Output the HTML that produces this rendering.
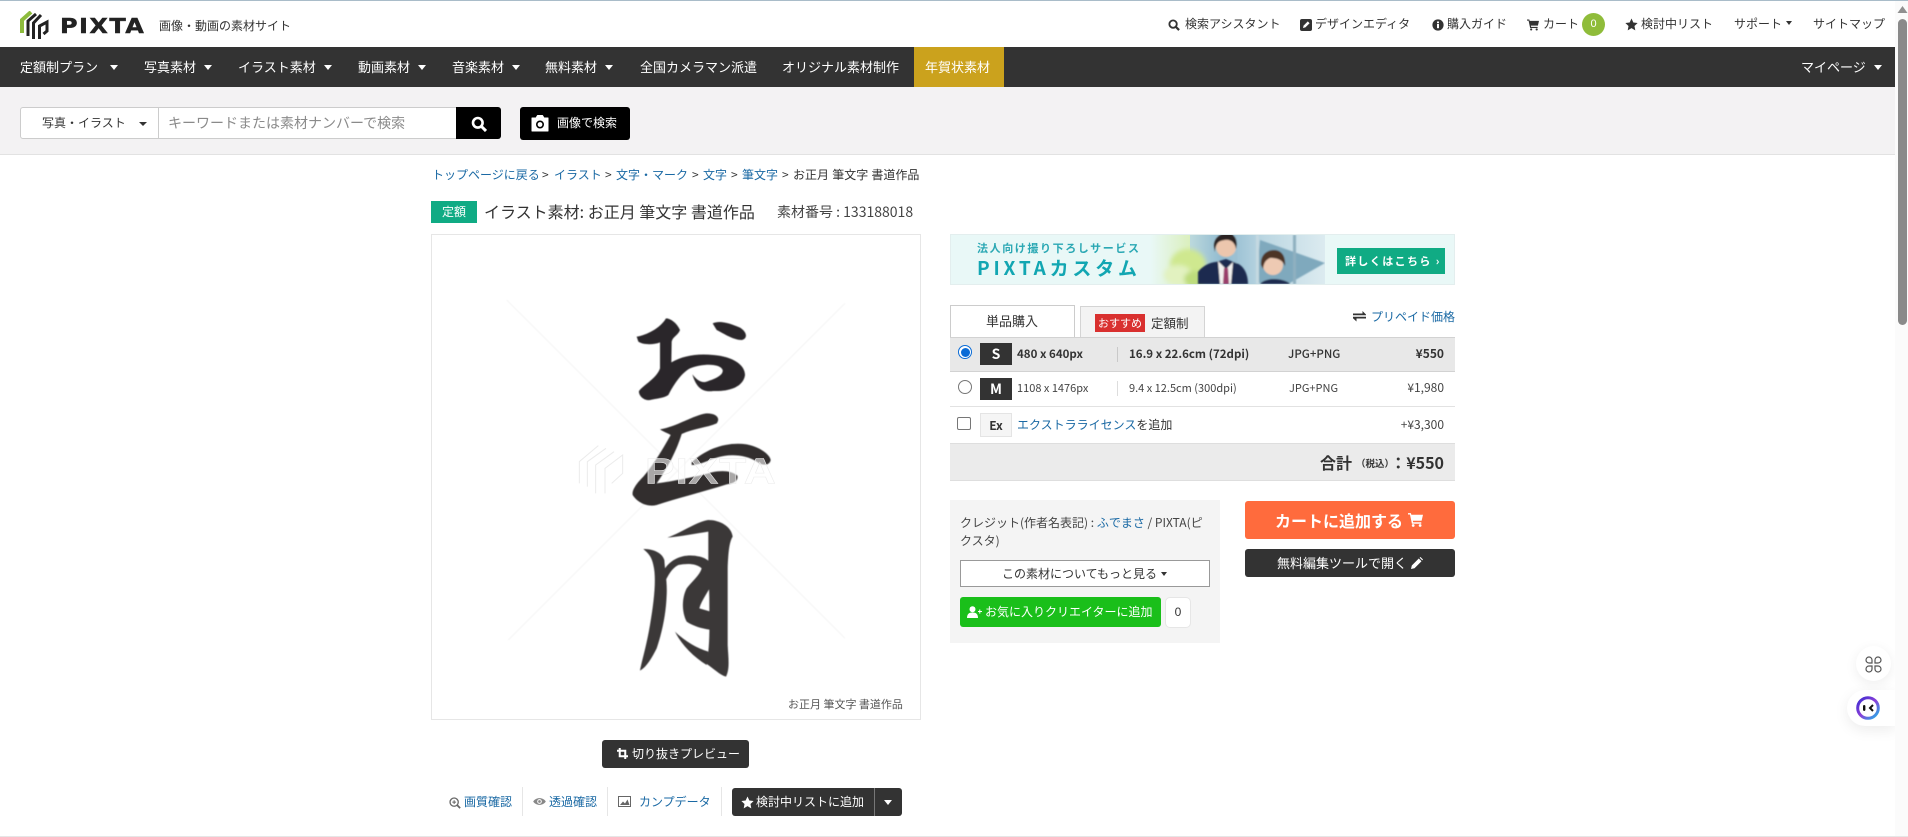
<!DOCTYPE html>
<html lang="ja">
<head>
<meta charset="utf-8">
<title>お正月 筆文字 書道作品 - PIXTA</title>
<style>
html,body{margin:0;padding:0;background:#fff;width:1908px;height:837px;overflow:hidden}
body{position:relative;font-family:"Liberation Sans","Noto Sans CJK JP",sans-serif;color:#333;font-size:12px}
.t{position:absolute;white-space:nowrap;font-family:"Noto Sans CJK JP","Liberation Sans",sans-serif;line-height:20px;font-size:12px}
.b{position:absolute;box-sizing:border-box}
.w{color:#fff}
a{color:#1a69a4;text-decoration:none}
.c{position:absolute;width:0;height:0;border-left:4px solid transparent;border-right:4px solid transparent;border-top:5px solid #fff}
svg{position:absolute;display:block}
</style>
</head>
<body>
<div class="b" style="left:0;top:0;width:1908px;height:1px;background:#a9bcc9"></div>

<!-- logo -->
<svg style="left:20px;top:11px" width="29" height="28" viewBox="0 0 29 28" fill="none" stroke-width="3">
<path d="M2 22V9L11 1" stroke="#8dbb3c" stroke-width="4"/>
<path d="M8 25V10L16 3" stroke="#222"/>
<path d="M13.500 28V12L21 4" stroke="#222"/>
<path d="M19.500 28V15L27 11V20L23.500 23" stroke="#222"/>
</svg>
<div class="t" style="left:60px;top:16px;font-family:'DejaVu Sans',sans-serif;font-weight:700;font-size:20px;line-height:20px;letter-spacing:1.200px;color:#222;-webkit-text-stroke:.4px #222;transform:scaleX(1.2);transform-origin:0 50%">PIXTA</div>
<div class="t" style="left:159px;top:16px;color:#333">画像・動画の素材サイト</div>

<!-- top right links -->
<svg style="left:1168px;top:19px" width="12" height="12" viewBox="0 0 13 13" fill="none" stroke="#333" stroke-width="2"><circle cx="5.500" cy="5.500" r="4"/><path d="M8.500 8.500L12 12" stroke-width="2.400"/></svg>
<div class="t" style="left:1185px;top:14px">検索アシスタント</div>
<svg style="left:1300px;top:19px" width="12" height="12" viewBox="0 0 12 12"><rect width="12" height="12" rx="2" fill="#333"/><path d="M3 9l.6-2.400L7.800 2.400 9.600 4.200 5.400 8.400z" fill="#fff"/></svg>
<div class="t" style="left:1315px;top:14px">デザインエディタ</div>
<svg style="left:1432px;top:19px" width="12" height="12" viewBox="0 0 12 12"><circle cx="6" cy="6" r="5.600" fill="#333"/><rect x="5" y="5" width="2" height="4.200" fill="#fff"/><rect x="5" y="2.500" width="2" height="1.700" fill="#fff"/></svg>
<div class="t" style="left:1447px;top:14px">購入ガイド</div>
<svg style="left:1527px;top:19px" width="12" height="12" viewBox="0 0 13 12" fill="#333"><path d="M0 0h2.500l.4 1.500H13l-1.200 5.200H4.200l.3 1.300H11.500v1.200H3.400L1.700 1.200H0z"/><circle cx="4.500" cy="10.800" r="1.200"/><circle cx="10.500" cy="10.800" r="1.200"/></svg>
<div class="t" style="left:1543px;top:14px">カート</div>
<div class="b" style="left:1582px;top:13px;width:23px;height:23px;border-radius:50%;background:#8fbc3a;color:#fff;text-align:center;line-height:23px;font-size:11px">0</div>
<svg style="left:1625px;top:18px" width="13" height="13" viewBox="0 0 24 24" fill="#333"><path d="M12 1l3.400 7.300 7.900 1-5.800 5.500 1.500 8L12 18.800 5 22.800l1.500-8L.7 9.300l7.900-1z"/></svg>
<div class="t" style="left:1641px;top:14px">検討中リスト</div>
<div class="t" style="left:1734px;top:14px">サポート</div>
<div class="c" style="left:1786px;top:21px;border-top-color:#333;border-left-width:3.500px;border-right-width:3.500px;border-top-width:4px"></div>
<div class="t" style="left:1813px;top:14px">サイトマップ</div>

<!-- nav -->
<div class="b" style="left:0;top:47px;width:1895px;height:40px;background:#333"></div>
<div class="b" style="left:914px;top:47px;width:90px;height:40px;background:#cba21d"></div>
<div class="t w" style="left:20px;top:57px;font-size:13px">定額制プラン</div><div class="c" style="left:110px;top:65px"></div>
<div class="t w" style="left:144px;top:57px;font-size:13px">写真素材</div><div class="c" style="left:204px;top:65px"></div>
<div class="t w" style="left:238px;top:57px;font-size:13px">イラスト素材</div><div class="c" style="left:324px;top:65px"></div>
<div class="t w" style="left:358px;top:57px;font-size:13px">動画素材</div><div class="c" style="left:418px;top:65px"></div>
<div class="t w" style="left:452px;top:57px;font-size:13px">音楽素材</div><div class="c" style="left:512px;top:65px"></div>
<div class="t w" style="left:545px;top:57px;font-size:13px">無料素材</div><div class="c" style="left:605px;top:65px"></div>
<div class="t w" style="left:640px;top:57px;font-size:13px">全国カメラマン派遣</div>
<div class="t w" style="left:782px;top:57px;font-size:13px">オリジナル素材制作</div>
<div class="t w" style="left:925px;top:57px;font-size:13px">年賀状素材</div>
<div class="t w" style="left:1801px;top:57px;font-size:13px">マイページ</div><div class="c" style="left:1874px;top:65px"></div>

<!-- search -->
<div class="b" style="left:0;top:87px;width:1895px;height:68px;background:#f3f2f3;border-bottom:1px solid #e2e2e2"></div>
<div class="b" style="left:20px;top:107px;width:437px;height:32px;background:#fff;border:1px solid #ccc;border-radius:3px 0 0 3px"></div>
<div class="b" style="left:158px;top:108px;width:1px;height:30px;background:#ccc"></div>
<div class="t" style="left:42px;top:113px;color:#333">写真・イラスト</div>
<div class="c" style="left:139px;top:122px;border-top-color:#333;border-top-width:4px"></div>
<div class="t" style="left:168px;top:113px;font-size:14px;color:#8a8a8a">キーワードまたは素材ナンバーで検索</div>
<div class="b" style="left:456px;top:107px;width:45px;height:32px;background:#000;border-radius:0 3px 3px 0"></div>
<svg style="left:471px;top:116px" width="16" height="16" viewBox="0 0 16 16" fill="none" stroke="#fff" stroke-width="2.600"><circle cx="6.800" cy="6.800" r="4.800"/><path d="M10.500 10.500L15 15" stroke-width="3"/></svg>
<div class="b" style="left:520px;top:107px;width:110px;height:33px;background:#000;border-radius:3px"></div>
<svg style="left:531px;top:115px" width="18" height="17" viewBox="0 0 18 17"><path d="M1 3h4l1.500-2.500h5L13 3h4v13H1z" fill="#fff" stroke="#fff" stroke-linejoin="round"/><circle cx="9" cy="9.500" r="3.200" fill="none" stroke="#000" stroke-width="1.600"/></svg>
<div class="t w" style="left:557px;top:113px">画像で検索</div>

<!-- breadcrumb -->
<div class="t" style="left:432px;top:165px"><a href="#">トップページに戻る</a></div>
<div class="t" style="left:542px;top:165px">&gt;</div>
<div class="t" style="left:554px;top:165px"><a href="#">イラスト</a></div>
<div class="t" style="left:605px;top:165px">&gt;</div>
<div class="t" style="left:616px;top:165px"><a href="#">文字・マーク</a></div>
<div class="t" style="left:692px;top:165px">&gt;</div>
<div class="t" style="left:703px;top:165px"><a href="#">文字</a></div>
<div class="t" style="left:731px;top:165px">&gt;</div>
<div class="t" style="left:742px;top:165px"><a href="#">筆文字</a></div>
<div class="t" style="left:782px;top:165px">&gt;</div>
<div class="t" style="left:793px;top:165px;word-spacing:.5px">お正月 筆文字 書道作品</div>

<!-- title -->
<div class="b" style="left:431px;top:201px;width:46px;height:22px;background:#10ab84;color:#fff;text-align:center;line-height:22px;font-family:'Noto Sans CJK JP',sans-serif">定額</div>
<div class="t" style="left:484px;top:201px;font-size:16px;color:#333">イラスト素材: お正月 筆文字 書道作品</div>
<div class="t" style="left:777px;top:202px;font-size:14px;color:#444">素材番号 : 133188018</div>

<!-- main image -->
<div class="b" style="left:431px;top:234px;width:490px;height:486px;border:1px solid #e6e6e6;background:#fff"></div>
<svg style="left:430px;top:235px" width="500" height="490" viewBox="0 0 1500 1470">
<defs>
<filter id="bl" x="-5%" y="-5%" width="110%" height="110%"><feGaussianBlur stdDeviation="1.800"/></filter>
<filter id="bl2" x="-5%" y="-5%" width="110%" height="110%"><feGaussianBlur stdDeviation="1.500"/></filter>
</defs>
<path d="M230 195L1245 1210M1245 205L235 1215" stroke="#f4f4f4" stroke-width="3" fill="none" filter="url(#bl2)"/>
<g fill="#2b2829" filter="url(#bl)">
<path d="M620 305C650 300 690 280 708 250C720 250 740 262 750 285C745 300 728 305 725 320L724 382C760 362 800 355 850 360C910 365 945 390 945 420C940 455 900 470 850 468C820 472 800 462 787 418C800 435 815 445 830 440C860 430 880 420 878 405C870 385 820 385 780 400C760 410 735 440 715 480C700 490 680 490 660 495C640 498 625 480 627 468C640 450 680 430 690 400L690 322C670 330 640 330 625 320Z"/>
<path d="M848 265C870 255 900 265 930 278C950 290 955 310 935 315C910 315 880 295 860 285Z"/>
</g>
<g fill="#302d2e" filter="url(#bl)">
<path d="M690 583C740 575 790 540 830 535C860 535 872 550 860 565C830 578 790 580 755 597C745 630 725 680 680 745C720 740 800 725 845 712C880 705 905 708 922 722C925 735 915 745 890 748C820 770 740 790 680 810C650 818 620 800 608 780C605 765 620 745 640 725C670 690 700 640 722 600C715 595 700 590 690 583Z"/>
<path d="M785 682C830 640 890 620 950 628C990 635 1020 660 1022 675C1020 690 1000 695 980 680C950 660 900 655 860 668C830 678 810 690 785 690Z"/>
</g>
<g fill="#3a3738" filter="url(#bl)">
<path d="M640 942C665 942 695 950 703 975C705 1010 712 1040 710 1080C708 1130 700 1180 680 1240C665 1270 650 1295 630 1307C635 1280 650 1230 660 1170C672 1100 680 1030 670 990C665 965 655 955 640 942Z"/>
<path d="M712 908C760 890 800 860 835 855C870 855 905 875 908 905C898 920 895 950 893 1000L893 1230C895 1270 900 1300 888 1325C870 1320 850 1300 828 1285L835 1250C840 1200 838 1150 838 1090L835 990L835 890C800 895 750 905 712 908Z"/>
<path d="M705 1000C730 965 770 955 810 965C850 975 860 1010 850 1040C835 1070 815 1095 808 1120L860 1135C885 1140 890 1165 880 1185C840 1190 790 1175 770 1160C755 1130 755 1090 770 1060C785 1040 810 1020 815 1000C800 985 770 985 745 990C725 1000 715 1020 705 1040Z"/>
<path d="M735 1190C760 1215 800 1240 835 1250L830 1290C790 1265 755 1230 735 1190Z"/>
</g>
<g fill="none" stroke="#ebebeb" stroke-width="3">
<path d="M448 745V680L505 632M472 755V680L528 640M497 775V690L552 650M525 775V700L578 660V715L545 745"/>
</g>
<text x="645" y="745" font-family="Liberation Sans,sans-serif" font-weight="700" font-size="108" letter-spacing="2" textLength="395" lengthAdjust="spacingAndGlyphs" fill="#fff" fill-opacity=".58" stroke="#ececec" stroke-width="1.500">PIXTA</text>
</svg>
<div class="t" style="left:788px;top:694px;font-size:11px;color:#555">お正月 筆文字 書道作品</div>

<!-- crop button -->
<div class="b" style="left:602px;top:740px;width:147px;height:28px;background:#333;border-radius:3px"></div>
<svg style="left:617px;top:748px" width="11" height="11" viewBox="0 0 12 12" fill="none" stroke="#fff" stroke-width="2.200"><path d="M3 0V9H12M0 3H9V12"/></svg>
<div class="t w" style="left:632px;top:744px">切り抜きプレビュー</div>

<!-- under image row -->
<svg style="left:449px;top:797px" width="12" height="12" viewBox="0 0 14 14" fill="none" stroke="#666" stroke-width="1.500"><circle cx="6" cy="6" r="4.800"/><path d="M9.500 9.500L13 13" stroke-width="2"/><path d="M3.800 6H8.200M6 3.800V8.200" stroke-width="1.200"/></svg>
<div class="t" style="left:464px;top:792px"><a href="#">画質確認</a></div>
<div class="b" style="left:522px;top:787px;width:1px;height:29px;background:#e6e6e6"></div>
<svg style="left:533px;top:797px" width="13" height="9" viewBox="0 0 14 10"><path d="M0 5C3 0 11 0 14 5C11 10 3 10 0 5Z" fill="#888"/><circle cx="7" cy="5" r="2.600" fill="#fff"/><circle cx="7" cy="5" r="1.500" fill="#888"/></svg>
<div class="t" style="left:549px;top:792px"><a href="#">透過確認</a></div>
<div class="b" style="left:607px;top:787px;width:1px;height:29px;background:#e6e6e6"></div>
<svg style="left:618px;top:796px" width="13" height="11" viewBox="0 0 13 11"><rect x=".5" y=".5" width="12" height="10" fill="#fff" stroke="#666"/><path d="M2 9L5 5.500L7 7.500L9.500 3.500L11.500 9Z" fill="#666"/></svg>
<div class="t" style="left:639px;top:792px"><a href="#">カンプデータ</a></div>
<div class="b" style="left:721px;top:787px;width:1px;height:29px;background:#e6e6e6"></div>
<div class="b" style="left:732px;top:788px;width:170px;height:28px;background:#333;border-radius:3px"></div>
<div class="b" style="left:874px;top:788px;width:1px;height:28px;background:#777"></div>
<svg style="left:741px;top:796px" width="13" height="13" viewBox="0 0 24 24" fill="#fff"><path d="M12 1l3.400 7.300 7.900 1-5.800 5.500 1.500 8L12 18.800 5 22.800l1.500-8L.7 9.300l7.900-1z"/></svg>
<div class="t w" style="left:756px;top:792px">検討中リストに追加</div>
<div class="c" style="left:884px;top:800px"></div>

<!-- banner -->
<div class="b" style="left:950px;top:234px;width:505px;height:51px;background:#e9f8f7;border:1px solid #e3eeee;overflow:hidden"></div>
<svg style="left:1150px;top:235px" width="175" height="49" viewBox="0 0 175 49">
<defs>
<linearGradient id="fg" x1="0" x2="1" y1="0" y2="0"><stop offset="0" stop-color="#e9f8f7"/><stop offset=".5" stop-color="#dff2d0"/><stop offset="1" stop-color="#d5eca6"/></linearGradient>
<linearGradient id="bg" x1="0" x2="1" y1="0" y2="0"><stop offset="0" stop-color="#bcd9dd"/><stop offset=".25" stop-color="#8fb9cf"/><stop offset=".55" stop-color="#bcd7e2"/><stop offset="1" stop-color="#dcebf0"/></linearGradient>
<filter id="s"><feGaussianBlur stdDeviation=".7"/></filter>
<filter id="s2"><feGaussianBlur stdDeviation="2.500"/></filter>
</defs>
<rect width="55" height="49" fill="url(#fg)"/>
<rect x="40" width="135" height="49" fill="url(#bg)"/>
<g filter="url(#s2)">
<ellipse cx="38" cy="30" rx="18" ry="16" fill="#cfe88f"/>
<ellipse cx="28" cy="40" rx="14" ry="10" fill="#e2f2c0"/>
<ellipse cx="44" cy="44" rx="10" ry="8" fill="#bddc7c"/>
</g>
<g filter="url(#s)" transform="translate(48 0)">
<path d="M62 5L127 28L92 48H58Z" fill="#7fa9bd"/>
<rect x="36" y="0" width="3" height="49" fill="#9cc0d1"/><rect x="58" y="0" width="3" height="49" fill="#c4d9e1"/><rect x="95" y="0" width="3" height="49" fill="#8fb0c0"/>
<path d="M0 49V37C5 30 14 27 18 27L28 24L38 28C45 30 50 38 50 49Z" fill="#1e2b50"/>
<path d="M20 26L28 34L35 27L33 49H22Z" fill="#f3f1ef"/>
<path d="M26 33H30L31 49H25Z" fill="#9a3d6a"/>
<circle cx="28" cy="12" r="10" fill="#ecc6ad"/>
<path d="M16 11C16 2 24 -2 30 -2C38 -1 40 7 38 14C37 7 32 4 27 5C22 6 18 6 17 17Z" fill="#2c2320"/>
<path d="M62 49C65 45 72 44 76 44C82 44 90 46 92 49Z" fill="#1e2b50"/>
<circle cx="75" cy="30" r="10" fill="#eecab3"/>
<path d="M63 30C62 20 69 15 76 15C84 15 88 22 87 31C84 24 78 23 72 23C68 25 66 27 65 34Z" fill="#4d3528"/>
</g>
</svg>
<div class="t" style="left:977px;top:238px;font-size:11px;font-weight:700;letter-spacing:1.600px;color:#2ba8b4">法人向け撮り下ろしサービス</div>
<div class="t" style="left:977px;top:256px;font-size:19px;line-height:24px;font-weight:700;letter-spacing:3.800px;color:#12a6b2">PIXTAカスタム</div>
<div class="b" style="left:1337px;top:248px;width:108px;height:26px;background:#10ab84"></div>
<div class="t w" style="left:1345px;top:251px;font-size:11px;font-weight:700;letter-spacing:1.400px">詳しくはこちら ›</div>

<!-- tabs -->
<div class="b" style="left:950px;top:305px;width:125px;height:33px;background:#fff;border:1px solid #ccc;border-bottom:none"></div>
<div class="t" style="left:986px;top:311px;font-size:13px">単品購入</div>
<div class="b" style="left:1080px;top:306px;width:125px;height:31px;background:#f3f3f3;border:1px solid #d4d4d4;border-bottom:none"></div>
<div class="b" style="left:1095px;top:314px;width:50px;height:18px;background:#d9302f;color:#fff;text-align:center;line-height:18px;font-size:11px;font-family:'Noto Sans CJK JP',sans-serif">おすすめ</div>
<div class="t" style="left:1151px;top:313px;font-size:12.500px">定額制</div>
<svg style="left:1353px;top:311px" width="13" height="12" viewBox="0 0 13 12" fill="#333"><path d="M0 2.500H9.500V0L13 3.500V4.200H0ZM13 7.500H3.500V10.500L0 7.200V5.800H13Z"/></svg>
<div class="t" style="left:1371px;top:307px"><a href="#">プリペイド価格</a></div>

<!-- price table -->
<div class="b" style="left:950px;top:337px;width:505px;height:35px;background:#e8e8e8;border-top:1px solid #d2d2d2;border-bottom:1px solid #d2d2d2"></div>
<div class="b" style="left:950px;top:406px;width:505px;height:1px;background:#e2e2e2"></div>
<div class="b" style="left:950px;top:443px;width:505px;height:38px;background:#ebebeb;border-top:1px solid #dedede;border-bottom:1px solid #dedede"></div>

<div class="b" style="left:958px;top:345px;width:14px;height:14px;border-radius:50%;background:#fff;border:1.500px solid #0a6bd6"></div>
<div class="b" style="left:960.500px;top:347.500px;width:9px;height:9px;border-radius:50%;background:#0a6bd6"></div>
<div class="b" style="left:958px;top:380px;width:14px;height:14px;border-radius:50%;background:#fff;border:1px solid #767676"></div>
<div class="b" style="left:957px;top:417px;width:14px;height:13px;border-radius:2px;background:#fff;border:1px solid #767676"></div>

<div class="b" style="left:980px;top:343px;width:32px;height:22px;background:#333;color:#fff;text-align:center;line-height:22px;font-size:14px;font-weight:700;font-family:'Noto Sans CJK JP',sans-serif">S</div>
<div class="b" style="left:980px;top:378px;width:32px;height:22px;background:#333;color:#fff;text-align:center;line-height:22px;font-size:14px;font-weight:700;font-family:'Noto Sans CJK JP',sans-serif">M</div>
<div class="b" style="left:980px;top:413px;width:32px;height:24px;background:#f5f5f5;border:1px solid #e4e4e4;color:#333;text-align:center;line-height:23px;font-size:12px;font-weight:700;font-family:'Noto Sans CJK JP',sans-serif">Ex</div>

<div class="t" style="left:1017px;top:344px;font-size:11.500px;font-weight:700">480 x 640px</div>
<div class="b" style="left:1117px;top:347px;width:1px;height:15px;background:#c9c9c9"></div>
<div class="t" style="left:1129px;top:344px;font-size:11.500px;font-weight:700">16.9 x 22.6cm (72dpi)</div>
<div class="t" style="left:1288px;top:344px;font-size:11.500px;font-weight:500">JPG+PNG</div>
<div class="t" style="right:464px;top:344px;font-size:12px;font-weight:700">¥550</div>

<div class="t" style="left:1017px;top:378px;font-size:11px;color:#444">1108 x 1476px</div>
<div class="b" style="left:1117px;top:381px;width:1px;height:15px;background:#ddd"></div>
<div class="t" style="left:1129px;top:378px;font-size:11px;color:#444">9.4 x 12.5cm (300dpi)</div>
<div class="t" style="left:1289px;top:378px;font-size:11px;color:#444">JPG+PNG</div>
<div class="t" style="right:464px;top:378px;font-size:12px;color:#444">¥1,980</div>

<div class="t" style="left:1017px;top:415px"><a href="#">エクストラライセンス</a>を追加</div>
<div class="t" style="right:464px;top:415px;color:#444">+¥3,300</div>

<div class="t" style="left:1320px;top:452px;font-size:16px;font-weight:700">合計</div>
<div class="t" style="left:1356px;top:453px;font-size:9.500px;font-weight:700">（税込）</div>
<div class="t" style="right:464px;top:452px;font-size:16px;font-weight:700">：¥550</div>

<!-- credit panel -->
<div class="b" style="left:950px;top:500px;width:270px;height:143px;background:#f4f4f4"></div>
<div class="t" style="left:960px;top:514px;line-height:18px;white-space:normal;width:245px;color:#444">クレジット(作者名表記) : <a href="#">ふでまさ</a> / PIXTA(ピクスタ)</div>
<div class="b" style="left:960px;top:560px;width:250px;height:27px;background:#fff;border:1px solid #999"></div>
<div class="t" style="left:1002px;top:564px;color:#333">この素材についてもっと見る</div>
<div class="c" style="left:1161px;top:572px;border-top-color:#333;border-left-width:3.500px;border-right-width:3.500px;border-top-width:4px"></div>
<div class="b" style="left:960px;top:597px;width:201px;height:30px;background:#1abf1a;border-radius:3px"></div>
<svg style="left:967px;top:606px" width="15" height="12" viewBox="0 0 15 12" fill="#fff"><circle cx="5.500" cy="3.200" r="3"/><path d="M0 12C0 8 2 6.500 5.500 6.500S11 8 11 12Z"/><path d="M11 5h1.300V3.500h1V5H15v1h-1.700v1.600h-1V6H11z"/></svg>
<div class="t w" style="left:985px;top:602px">お気に入りクリエイターに追加</div>
<div class="b" style="left:1165px;top:597px;width:26px;height:31px;background:#fff;border:1px solid #e6e6e6;border-radius:5px;text-align:center;line-height:29px;font-size:12px">0</div>

<!-- cart buttons -->
<div class="b" style="left:1245px;top:501px;width:210px;height:38px;background:#ff6b3d;border-radius:3px"></div>
<div class="t w" style="left:1275px;top:510px;font-size:16px;font-weight:700">カートに追加する</div>
<svg style="left:1408px;top:513px" width="15" height="14" viewBox="0 0 13 12" fill="#fff"><path d="M0 0h2.500l.4 1.500H13l-1.200 5.200H4.200l.3 1.300H11.500v1.200H3.400L1.700 1.200H0z"/><circle cx="4.500" cy="10.800" r="1.200"/><circle cx="10.500" cy="10.800" r="1.200"/></svg>
<div class="b" style="left:1245px;top:549px;width:210px;height:28px;background:#333;border-radius:3px"></div>
<div class="t w" style="left:1277px;top:553px;font-size:13px">無料編集ツールで開く</div>
<svg style="left:1411px;top:557px" width="12" height="12" viewBox="0 0 12 12" fill="#fff"><path d="M0 12L.8 8.500L7.800 1.500L10.500 4.200L3.500 11.200ZM8.600.7L9.500 0L12 2.500L11.300 3.400Z"/></svg>

<!-- floating widgets -->
<div class="b" style="left:1856px;top:646px;width:35px;height:35px;border-radius:50%;background:#fff;box-shadow:0 3px 12px rgba(0,0,0,.07)"></div>
<svg style="left:1865px;top:656px" width="17" height="17" viewBox="0 0 17 17" fill="none" stroke="#555" stroke-width="1.200"><path d="M1 4a3 3 0 0 1 6 0v3H4a3 3 0 0 1-3-3ZM10 4a3 3 0 0 1 6 0a3 3 0 0 1-3 3H10ZM1 13a3 3 0 0 1 3-3h3v3a3 3 0 0 1-6 0ZM10 10h3a3 3 0 0 1 0 6a3 3 0 0 1-3-3Z"/></svg>
<div class="b" style="left:1847px;top:690px;width:48px;height:36px;border-radius:18px 0 0 18px;background:#fff;box-shadow:0 4px 14px rgba(0,0,0,.08)"></div>
<svg style="left:1856px;top:696px" width="24" height="24" viewBox="0 0 24 24">
<defs><linearGradient id="rg" x1="0" y1="0" x2="1" y2="1"><stop offset="0" stop-color="#3a2bd0"/><stop offset=".5" stop-color="#8a3fd8"/><stop offset="1" stop-color="#1fb6e8"/></linearGradient></defs>
<circle cx="12" cy="12" r="10.300" fill="#fff" stroke="url(#rg)" stroke-width="3"/>
<rect x="7" y="9" width="2.400" height="6" rx="1.200" fill="#111"/>
<path d="M17 9L14 12L17 15" fill="none" stroke="#111" stroke-width="2"/>
</svg>

<!-- scrollbar -->
<div class="b" style="left:1895px;top:1px;width:13px;height:836px;background:#fbfbfb"></div>
<div class="b" style="left:1898px;top:19px;width:9px;height:306px;background:#8a8a8a;border-radius:4.500px"></div>
<svg style="left:1897px;top:6px" width="11" height="7" viewBox="0 0 11 7"><path d="M5.500 0L10.500 7H.5Z" fill="#909090"/></svg>
<div class="b" style="left:0;top:836px;width:1908px;height:1px;background:#e6e6e6"></div>
</body>
</html>
